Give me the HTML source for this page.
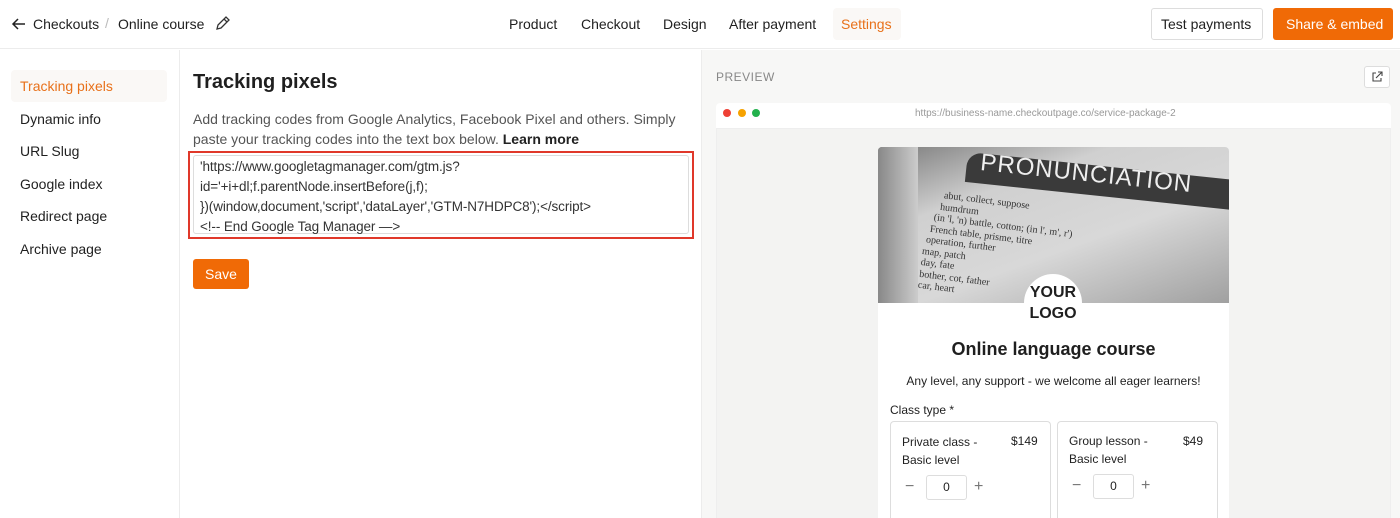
<!DOCTYPE html>
<html><head><meta charset="utf-8"><style>
*{box-sizing:border-box;margin:0;padding:0}
html,body{width:1400px;height:518px;overflow:hidden}
body{background:#fff;font-family:"Liberation Sans",sans-serif;color:#1f1f1f;position:relative}
.abs{position:absolute}
.top{height:49px;border-bottom:1px solid #ececec;width:1400px;position:absolute;top:0;left:0}
.t{position:absolute;font-size:14px;white-space:nowrap}
.side{left:0;top:50px;width:180px;height:468px;border-right:1px solid #ececec}
.si{position:absolute;left:20px;font-size:14px}
.prev{left:701px;top:50px;width:699px;height:468px;background:#f7f7f6;border-left:1px solid #ececec;overflow:hidden}
</style></head><body>
<div class="top">
 <svg class="abs" style="left:11px;top:16px" width="16" height="16" viewBox="0 0 16 16"><path d="M14 8H2M7 3L2 8l5 5" stroke="#222" stroke-width="1.5" fill="none"/></svg>
 <div class="t" style="left:33px;top:16px">Checkouts</div>
 <div class="t" style="left:105px;top:15px;color:#bbb">/</div>
 <div class="t" style="left:118px;top:16px">Online course</div>
 <svg class="abs" style="left:214px;top:15px" width="17" height="17" viewBox="0 0 17 17"><path d="M3 14l1-4 8-8 3 3-8 8z M10 4l3 3" stroke="#333" stroke-width="1.3" fill="none"/></svg>
 <div class="t" style="left:509px;top:16px">Product</div>
 <div class="t" style="left:581px;top:16px">Checkout</div>
 <div class="t" style="left:663px;top:16px">Design</div>
 <div class="t" style="left:729px;top:16px">After payment</div>
 <div class="abs" style="left:833px;top:8px;width:68px;height:32px;background:#faf8f6;border-radius:4px"></div>
 <div class="t" style="left:841px;top:16px;color:#e8711a">Settings</div>
 <div class="abs" style="left:1151px;top:8px;width:112px;height:32px;border:1px solid #ddd;border-radius:3px"></div>
 <div class="t" style="left:1161px;top:16px">Test payments</div>
 <div class="abs" style="left:1273px;top:8px;width:120px;height:32px;background:#f06a06;border-radius:3px"></div>
 <div class="t" style="left:1286px;top:16px;color:#fff">Share &amp; embed</div>
</div>
<div class="abs side">
 <div class="abs" style="left:11px;top:20px;width:156px;height:32px;background:#faf8f6;border-radius:4px"></div>
 <div class="si" style="top:28px;color:#e8711a">Tracking pixels</div>
 <div class="si" style="top:61px">Dynamic info</div>
 <div class="si" style="top:93px">URL Slug</div>
 <div class="si" style="top:126px">Google index</div>
 <div class="si" style="top:158px">Redirect page</div>
 <div class="si" style="top:191px">Archive page</div>
</div>
<div class="t" style="left:193px;top:71px;font-size:20px;font-weight:bold">Tracking pixels</div>
<div class="abs" style="left:193px;top:109px;width:490px;font-size:14px;line-height:20px;color:#555">Add tracking codes from Google Analytics, Facebook Pixel and others. Simply paste your tracking codes into the text box below. <b style="color:#222">Learn more</b></div>
<div class="abs" style="left:188px;top:151px;width:506px;height:88px;border:2px solid #e0382a"></div>
<div class="abs" style="left:193px;top:155px;width:496px;height:79px;border:1px solid #ddd;border-radius:3px"></div>
<div class="abs" style="left:200px;top:157px;font-size:13.5px;line-height:20px;color:#333;white-space:pre;letter-spacing:-0.1px">'https://www.googletagmanager.com/gtm.js?
id='+i+dl;f.parentNode.insertBefore(j,f);
})(window,document,'script','dataLayer','GTM-N7HDPC8');&lt;/script&gt;
&lt;!-- End Google Tag Manager —&gt;</div>
<div class="abs" style="left:193px;top:259px;width:56px;height:30px;background:#f06a06;border-radius:3px;color:#fff;font-size:14px;text-align:center;line-height:30px">Save</div>
<div class="abs prev">
 <div class="t" style="left:14px;top:20px;font-size:12px;color:#888;letter-spacing:.5px">PREVIEW</div>
 <div class="abs" style="left:662px;top:16px;width:26px;height:22px;border:1px solid #ddd;border-radius:3px;background:#fff"></div>
 <svg class="abs" style="left:668px;top:20px" width="14" height="14" viewBox="0 0 14 14"><path d="M6 3H3v8h8V8M8 2h4v4M12 2L6 8" stroke="#444" stroke-width="1.1" fill="none"/></svg>
 <div class="abs" style="left:14px;top:53px;width:675px;height:415px;background:#f3f3f2;border:1px solid #eee;border-bottom:none;border-radius:4px 4px 0 0"></div>
 <div class="abs" style="left:14px;top:53px;width:675px;height:26px;background:#fff;border-bottom:1px solid #eee;border-radius:4px 4px 0 0"></div>
 <div class="abs" style="left:21px;top:59px;width:8px;height:8px;border-radius:50%;background:#ee4035"></div>
 <div class="abs" style="left:36px;top:59px;width:8px;height:8px;border-radius:50%;background:#f6a200"></div>
 <div class="abs" style="left:50px;top:59px;width:8px;height:8px;border-radius:50%;background:#22b14c"></div>
 <div class="t" style="left:213px;top:58px;font-size:10px;color:#999">https://business-name.checkoutpage.co/service-package-2</div>
 <div class="abs" style="left:176px;top:97px;width:351px;height:371px;background:#fff;border-radius:4px 4px 0 0"></div>
 <div class="abs" style="left:176px;top:97px;width:351px;height:156px;overflow:hidden;border-radius:4px 4px 0 0;background:linear-gradient(160deg,#7a7a7a 0%,#d0d0d0 30%,#d8d8d8 60%,#a0a0a0 100%)">
  <div class="abs" style="left:0;top:0;width:40px;height:156px;background:linear-gradient(90deg,#888,#ccc)"></div>
  <div class="abs" style="left:90px;top:5px;width:290px;height:30px;background:#3a3a3a;transform:rotate(6deg);transform-origin:left top;border-radius:14px 0 0 0"></div>
  <div class="abs" style="left:104px;top:2px;font-size:24px;color:#eee;transform:rotate(6deg);transform-origin:left top;letter-spacing:1px;white-space:nowrap">PRONUNCIATION</div>
  <div class="abs" style="left:45px;top:50px;font-family:'Liberation Serif',serif;font-size:10px;line-height:11.5px;color:#333;transform:rotate(7deg);white-space:pre">      abut, collect, suppose
     humdrum
   (in 'l, 'n) battle, cotton; (in l', m', r')
  French table, prisme, titre
 operation, further
map, patch
day, fate
bother, cot, father
car, heart</div>
 </div>
 <div class="abs" style="left:322px;top:224px;width:58px;height:58px;border-radius:50%;background:#fff;text-align:center;font-weight:bold;font-size:16px;line-height:21px;padding-top:8px">YOUR<br>LOGO</div>
 <div class="t" style="left:176px;width:351px;text-align:center;top:289px;font-size:18px;font-weight:bold">Online language course</div>
 <div class="t" style="left:176px;width:351px;text-align:center;top:324px;font-size:12px">Any level, any support - we welcome all eager learners!</div>
 <div class="t" style="left:188px;top:353px;font-size:12px">Class type *</div>
 <div class="abs" style="left:188px;top:371px;width:161px;height:97px;border:1px solid #ddd;border-bottom:none;border-radius:4px 4px 0 0"></div>
 <div class="abs" style="left:355px;top:371px;width:161px;height:97px;border:1px solid #ddd;border-bottom:none;border-radius:4px 4px 0 0"></div>
 <div class="abs" style="left:200px;top:383px;font-size:12px;line-height:18px">Private class -<br>Basic level</div>
 <div class="t" style="left:309px;top:384px;font-size:12px">$149</div>
 <div class="abs" style="left:367px;top:382px;font-size:12px;line-height:18px">Group lesson -<br>Basic level</div>
 <div class="t" style="left:481px;top:384px;font-size:12px">$49</div>
 <div class="t" style="left:203px;top:428px;font-size:16px;color:#777">−</div>
 <div class="abs" style="left:224px;top:425px;width:41px;height:25px;border:1px solid #ddd;border-radius:3px;text-align:center;line-height:23px;font-size:12px">0</div>
 <div class="t" style="left:272px;top:428px;font-size:16px;color:#777">+</div>
 <div class="t" style="left:370px;top:427px;font-size:16px;color:#777">−</div>
 <div class="abs" style="left:391px;top:424px;width:41px;height:25px;border:1px solid #ddd;border-radius:3px;text-align:center;line-height:23px;font-size:12px">0</div>
 <div class="t" style="left:439px;top:427px;font-size:16px;color:#777">+</div>
</div>
</body></html>
